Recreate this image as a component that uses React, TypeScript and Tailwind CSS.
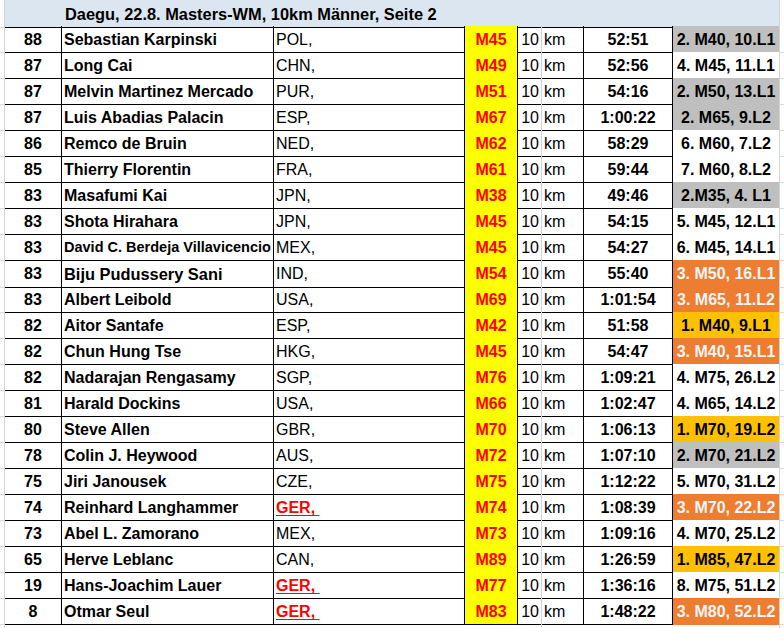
type Fill = "gray" | "white" | "orange" | "gold";

interface Result {
  score: string;
  name: string;
  country: string;
  age: string;
  time: string;
  place: string;
  fill: Fill;
  nameSize?: string;
}

const results: Result[] = [
  { score: "88", name: "Sebastian Karpinski", country: "POL", age: "M45", time: "52:51", place: "2. M40, 10.L1", fill: "gray" },
  { score: "87", name: "Long Cai", country: "CHN", age: "M49", time: "52:56", place: "4. M45, 11.L1", fill: "white" },
  { score: "87", name: "Melvin Martinez Mercado", country: "PUR", age: "M51", time: "54:16", place: "2. M50, 13.L1", fill: "gray" },
  { score: "87", name: "Luis Abadias Palacin", country: "ESP", age: "M67", time: "1:00:22", place: "2. M65, 9.L2", fill: "gray" },
  { score: "86", name: "Remco de Bruin", country: "NED", age: "M62", time: "58:29", place: "6. M60, 7.L2", fill: "white" },
  { score: "85", name: "Thierry Florentin", country: "FRA", age: "M61", time: "59:44", place: "7. M60, 8.L2", fill: "white" },
  { score: "83", name: "Masafumi Kai", country: "JPN", age: "M38", time: "49:46", place: "2.M35, 4. L1", fill: "gray" },
  { score: "83", name: "Shota Hirahara", country: "JPN", age: "M45", time: "54:15", place: "5. M45, 12.L1", fill: "white" },
  { score: "83", name: "David C. Berdeja Villavicencio", country: "MEX", age: "M45", time: "54:27", place: "6. M45, 14.L1", fill: "white", nameSize: "text-[14.5px]" },
  { score: "83", name: "Biju Pudussery Sani", country: "IND", age: "M54", time: "55:40", place: "3. M50, 16.L1", fill: "orange", nameSize: "text-[16.4px]" },
  { score: "83", name: "Albert Leibold", country: "USA", age: "M69", time: "1:01:54", place: "3. M65, 11.L2", fill: "orange" },
  { score: "82", name: "Aitor Santafe", country: "ESP", age: "M42", time: "51:58", place: "1. M40, 9.L1", fill: "gold" },
  { score: "82", name: "Chun Hung Tse", country: "HKG", age: "M45", time: "54:47", place: "3. M40, 15.L1", fill: "orange" },
  { score: "82", name: "Nadarajan Rengasamy", country: "SGP", age: "M76", time: "1:09:21", place: "4. M75, 26.L2", fill: "white" },
  { score: "81", name: "Harald Dockins", country: "USA", age: "M66", time: "1:02:47", place: "4. M65, 14.L2", fill: "white" },
  { score: "80", name: "Steve Allen", country: "GBR", age: "M70", time: "1:06:13", place: "1. M70, 19.L2", fill: "gold" },
  { score: "78", name: "Colin J. Heywood", country: "AUS", age: "M72", time: "1:07:10", place: "2. M70, 21.L2", fill: "gray" },
  { score: "75", name: "Jiri Janousek", country: "CZE", age: "M75", time: "1:12:22", place: "5. M70, 31.L2", fill: "white" },
  { score: "74", name: "Reinhard Langhammer", country: "GER", age: "M74", time: "1:08:39", place: "3. M70, 22.L2", fill: "orange" },
  { score: "73", name: "Abel L. Zamorano", country: "MEX", age: "M73", time: "1:09:16", place: "4. M70, 25.L2", fill: "white" },
  { score: "65", name: "Herve Leblanc", country: "CAN", age: "M89", time: "1:26:59", place: "1. M85, 47.L2", fill: "gold" },
  { score: "19", name: "Hans-Joachim Lauer", country: "GER", age: "M77", time: "1:36:16", place: "8. M75, 51.L2", fill: "white" },
  { score: "8", name: "Otmar Seul", country: "GER", age: "M83", time: "1:48:22", place: "3. M80, 52.L2", fill: "orange" },
];

// colored place cells hide the black row line, white ones keep it
const placeFill: Record<Fill, string> = {
  gray: "bg-[#bfbfbf] text-black border-b-[#bfbfbf]",
  white: "bg-white text-black border-b-black",
  orange: "bg-[#ed7d31] text-[#f5f5f5] border-b-[#ed7d31]",
  gold: "bg-[#ffc000] text-black border-b-[#ffc000]",
};

const GRID =
  "grid grid-cols-[4px_58px_212px_191px_53px_24px_42px_89px_107px_1fr] h-[26px]";

export default function App() {
  return (
    <div className="w-[784px] h-[628px] overflow-hidden bg-white text-black font-['Liberation_Sans',Arial,sans-serif] text-[16px]">
      <div className={GRID}>
        <div className="border-b border-[#d9d9d9]" />
        <div className="col-span-8 flex items-center pt-[2px] pl-[60px] bg-[#dce6f1] border-l border-l-[#d4d4d4] border-r border-r-[#d4d4d4] border-b border-b-black font-bold text-[16.4px]">
          Daegu, 22.8. Masters-WM, 10km Männer, Seite 2
        </div>
        <div />
      </div>

      {results.map((r, i) => (
        <div key={i} className={GRID}>
          <div className="border-b border-[#dadada]" />
          <div className="flex items-center justify-center pt-[2px] font-bold border-l border-l-[#d4d4d4] border-r border-r-black border-b border-b-black">
            {r.score}
          </div>
          <div
            className={`flex items-center pt-[2px] pl-[2px] font-bold whitespace-nowrap border-r border-b border-black ${
              r.nameSize ?? ""
            }`}
          >
            {r.name}
          </div>
          <div className="flex items-center pt-[2px] pl-[2px] border-r border-b border-black">
            {r.country === "GER" ? (
              <span className="font-bold text-[#ff0000] underline underline-offset-[2px] whitespace-pre">
                GER,{" "}
              </span>
            ) : (
              <span>{r.country},</span>
            )}
          </div>
          <div className="flex items-center justify-center pt-[2px] bg-[#ffff00] text-[#ff0000] font-bold border-r border-b border-black">
            {r.age}
          </div>
          <div className="flex items-center justify-end pt-[2px] pr-[2px] border-r border-r-[#d4d4d4] border-b border-b-black">
            10
          </div>
          <div className="flex items-center pt-[2px] pl-[2px] border-r border-b border-black">
            km
          </div>
          <div className="flex items-center justify-center pt-[2px] font-bold border-r border-b border-black">
            {r.time}
          </div>
          <div
            className={`flex items-center justify-center pt-[2px] font-bold border-r border-r-[#d4d4d4] border-b ${placeFill[r.fill]}`}
          >
            {r.place}
          </div>
          <div className="border-b border-[#dadada]" />
        </div>
      ))}

      <div className="grid grid-cols-[4px_58px_212px_191px_53px_24px_42px_89px_107px_1fr] h-[6px]">
        <div />
        <div className="border-l border-[#d4d4d4]" />
        <div />
        <div />
        <div />
        <div className="border-r border-[#d4d4d4]" />
        <div />
        <div />
        <div className="border-r border-[#d4d4d4]" />
        <div />
      </div>
    </div>
  );
}
